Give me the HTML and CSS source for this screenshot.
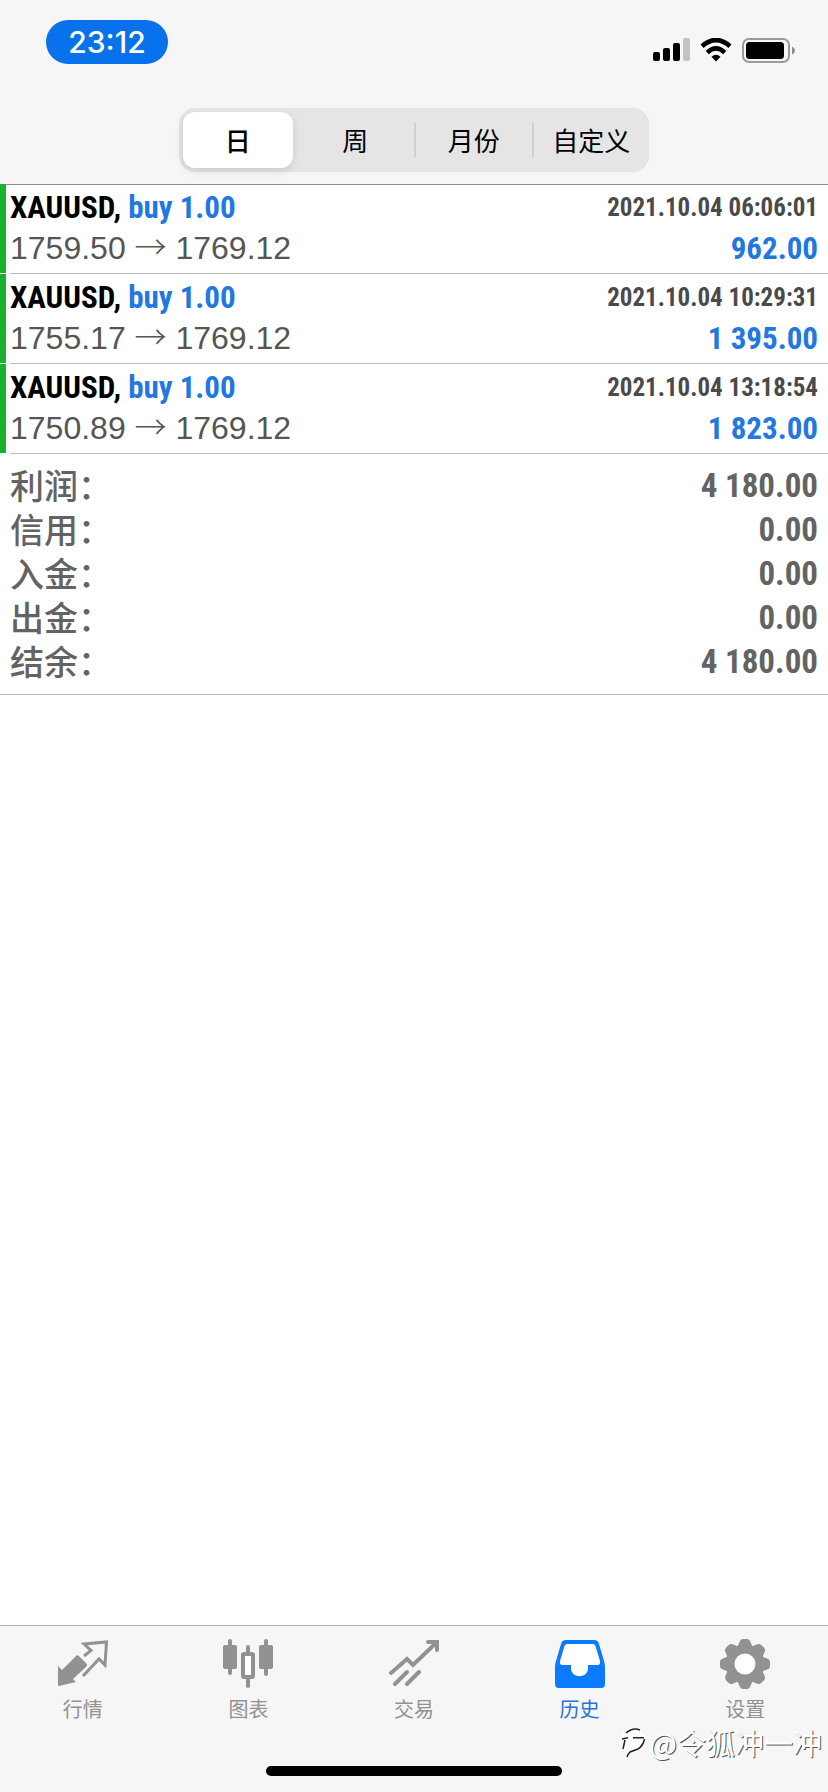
FILE: index.html
```html
<!DOCTYPE html>
<html lang="zh-CN">
<head>
  <meta charset="UTF-8" />
  <meta name="viewport" content="width=device-width, initial-scale=1.0"/>
  <title>历史</title>
  <link rel="stylesheet" href="styles.css">
</head>
<body>
  <header class="top">
    <div class="status">
      <span class="clock">23:12</span>
      <div class="status-icons">
        <svg width="37" height="24" viewBox="0 0 37 24">
          <rect x="0" y="14" width="7" height="9" rx="2"/>
          <rect x="10" y="10" width="7" height="13" rx="2"/>
          <rect x="20" y="5" width="7" height="18" rx="2"/>
          <rect x="30" y="0" width="7" height="23" rx="2" fill="#c3c3c3"/>
        </svg>
        <svg width="32" height="24" viewBox="0 0 32 24">
          <path d="M2 8.2Q16-4.200 30 8.200" fill="none" stroke="#000" stroke-width="4.600"/>
          <path d="M7.200 14.500Q16 6.400 24.800 14.500" fill="none" stroke="#000" stroke-width="4.600"/>
          <path d="M11.500 18.700Q16 15 20.500 18.700L16 23.500Z"/>
        </svg>
        <svg width="53" height="25" viewBox="0 0 53 25">
          <rect x="1" y="1" width="46" height="23" rx="6" fill="none" stroke="#9a9a9a" stroke-width="2"/>
          <rect x="4" y="4" width="38" height="17" rx="3.500"/>
          <path d="M50 8.500Q53 10 53 12.500T50 16.500Z" fill="#8c8c8c"/>
        </svg>
      </div>
    </div>
    <nav class="segments">
      <button class="segment active"><span>日</span></button>
      <button class="segment"><span>周</span></button>
      <button class="segment"><span>月份</span></button>
      <button class="segment"><span>自定义</span></button>
    </nav>
  </header>

  <main class="history">
    <ul class="deals">
      <li class="deal">
        <div class="deal-body">
          <div class="line"><span class="symbol">XAUUSD, <span class="side">buy 1.00</span></span><time class="date">2021.10.04 06:06:01</time></div>
          <div class="line"><span class="prices">1759.50 <span class="arrow">→</span> 1769.12</span><span class="profit">962.00</span></div>
        </div>
      </li>
      <li class="deal">
        <div class="deal-body">
          <div class="line"><span class="symbol">XAUUSD, <span class="side">buy 1.00</span></span><time class="date">2021.10.04 10:29:31</time></div>
          <div class="line"><span class="prices">1755.17 <span class="arrow">→</span> 1769.12</span><span class="profit">1 395.00</span></div>
        </div>
      </li>
      <li class="deal">
        <div class="deal-body">
          <div class="line"><span class="symbol">XAUUSD, <span class="side">buy 1.00</span></span><time class="date">2021.10.04 13:18:54</time></div>
          <div class="line"><span class="prices">1750.89 <span class="arrow">→</span> 1769.12</span><span class="profit">1 823.00</span></div>
        </div>
      </li>
    </ul>
    <dl class="summary">
      <div class="total"><dt>利润：</dt><dd>4 180.00</dd></div>
      <div class="total"><dt>信用：</dt><dd>0.00</dd></div>
      <div class="total"><dt>入金：</dt><dd>0.00</dd></div>
      <div class="total"><dt>出金：</dt><dd>0.00</dd></div>
      <div class="total"><dt>结余：</dt><dd>4 180.00</dd></div>
    </dl>
  </main>

  <footer class="bottom">
    <nav class="tabs">
      <a class="tab" href="#quotes">
        <svg width="50" height="50" viewBox="0 0 50 50">
          <path d="M0 27L4 31L17 18Q19 15 21 17L28 24Q30 26 28 28L15 40L18 43L1 47Q0 47 0 46Z"/>
          <path d="M26 17L33 11.500L26 5L48.500 3L47 26L41 20L25 37" fill="none" stroke="#929292" stroke-width="3"/>
        </svg>
        <span>行情</span>
      </a>
      <a class="tab" href="#charts">
        <svg width="50" height="50" viewBox="0 0 50 50">
          <rect x="0" y="6" width="14" height="24" rx="2"/>
          <rect x="5" y="0" width="4" height="36" rx="2"/>
          <rect x="36" y="6" width="14" height="24" rx="2"/>
          <rect x="41" y="0" width="4" height="37" rx="2"/>
          <path d="M25 8V14M25 38V47" fill="none" stroke="#929292" stroke-width="4" stroke-linecap="round"/>
          <rect x="20" y="15" width="10" height="23" rx="1" fill="#fff" stroke="#929292" stroke-width="4"/>
        </svg>
        <span>图表</span>
      </a>
      <a class="tab" href="#trade">
        <svg width="50" height="50" viewBox="0 0 50 50">
          <path d="M2 34L18 20L24 26L47 4M39 3H48V11M6 45L18 33M18 45L30 33" fill="none" stroke="#929292" stroke-width="4" stroke-linecap="round"/>
        </svg>
        <span>交易</span>
      </a>
      <a class="tab current" href="#history">
        <svg width="50" height="50" viewBox="0 0 50 50">
          <path d="M8 3H42L47 24L40 42H10L3 24Z" fill="#fff"/>
          <path fill-rule="evenodd" d="M11 1H39Q43 1 44 5L49 22Q50 25 50 28V45Q50 49 46 49H4Q0 49 0 45V28Q0 25 1 22L6 5Q7 1 11 1ZM12 5Q10 5 9.500 7L5 22Q4.500 26 7 26H16V29C16 40 33 40 33 29V26H43Q45.500 26 45 22L40.500 7Q40 5 38 5Z"/>
        </svg>
        <span>历史</span>
      </a>
      <a class="tab" href="#settings">
        <svg width="50" height="50" viewBox="0 0 50 50">
          <circle cx="25" cy="25" r="15" fill="#fff" stroke="#929292" stroke-width="9"/>
          <g id="teeth">
            <path id="tooth" d="M17 9L19.500 3Q20.500 0 23 0H27Q29.500 0 30.500 3L33 9Z"/>
            <use href="#tooth" transform="rotate(45 25 25)"/>
            <use href="#tooth" transform="rotate(90 25 25)"/>
            <use href="#tooth" transform="rotate(135 25 25)"/>
          </g>
          <use href="#teeth" transform="rotate(180 25 25)"/>
        </svg>
        <span>设置</span>
      </a>
    </nav>
    <div class="home-bar"></div>
    <div class="watermark">
      <svg width="30" height="34" viewBox="0 0 30 34">
        <circle cx="15" cy="15" r="12" fill="#fff"/>
        <path d="M8 8Q15 2 22 5M4 14L10 12.700M15 12.700H26M26.500 14Q25 21 20 24L12 27Q10 29 9 32M7 15L5 24" fill="none" stroke="#222" stroke-width="1.500"/>
      </svg>
      <span>@令狐冲一冲</span>
    </div>
  </footer>
</body>
</html>
```
FILE: styles.css
```css
* {
  margin: 0;
  padding: 0;
  box-sizing: border-box;
}

body {
  min-height: 100vh;
  display: flex;
  flex-direction: column;
  background: #fff;
  font-family: "Liberation Sans", "Noto Sans CJK SC", sans-serif;
}

.top {
  background: #f6f6f6;
  border-bottom: 1px solid #8c8c8c;
  padding-bottom: 12px;
}

.status {
  display: flex;
  justify-content: space-between;
  align-items: flex-start;
  height: 108px;
  padding: 20px 33px 0 46px;
}

.clock {
  width: 122px;
  border-radius: 22px;
  background: #0772ec;
  color: #fff;
  font: 500 30px/44px Inter, sans-serif;
  text-align: center;
}

.status-icons {
  display: flex;
  gap: 10px;
  padding-top: 18px;
}

/* Segmented control */
.segments {
  display: grid;
  grid-template-columns: repeat(4, 1fr);
  width: 57%;
  max-width: 470px;
  height: 64px;
  margin: 0 auto;
  border-radius: 16px;
  background: #e5e5e5;
}

.segment {
  display: flex;
  align-items: center;
  border: none;
  background: none;
  color: #000;
  font: 400 26px/34px "Noto Sans CJK SC", sans-serif;
}
.segment span {
  flex: 1;
}
.segment + .segment + .segment span {
  border-left: 2px solid #cfcfcf;
}
.segment.active {
  margin: 4px;
  border-radius: 12px;
  background: #fff;
  box-shadow: 0 3px 8px rgba(0, 0, 0, 0.12);
  font-weight: 500;
}

/* Deals */
.history {
  flex: 1;
}

.deals {
  margin-top: -1px;
  list-style: none;
}

.deal {
  display: flex;
  height: 90px;
}
.deal::before {
  content: '';
  width: 6px;
  margin-bottom: 1px;
  background: #18b22d;
}

.deal-body {
  flex: 1;
  margin-left: 4px;
  padding: 3px 10px 0 0;
  border-bottom: 1px solid #bdbdbd;
}

.line {
  display: flex;
  justify-content: space-between;
  align-items: center;
  height: 41px;
  line-height: 41px;
}

.symbol,
.date,
.profit,
.total dd {
  font-family: "Roboto Condensed", Roboto, sans-serif;
  font-weight: 700;
}

.symbol {
  font-size: 31px;
}
.side,
.profit {
  color: #2277e0;
}
.date {
  color: #4a4a4c;
  font-size: 25px;
}
.prices {
  color: #555;
  font-size: 32px;
}
.arrow {
  font-family: "Noto Sans CJK SC", sans-serif;
  font-weight: 300;
  line-height: 1;
}
.profit {
  font-size: 31px;
}

.summary {
  padding: 10px;
  border-bottom: 1px solid #bdbdbd;
  color: #636363;
}

.total {
  display: flex;
  justify-content: space-between;
  height: 44px;
  line-height: 44px;
}
.total dt {
  font-family: "Noto Sans CJK SC", sans-serif;
  font-size: 34px;
  font-weight: 500;
  line-height: 42px;
}
.total dd {
  font-size: 33px;
}

/* Tab bar */
.bottom {
  position: relative;
  padding: 13px 0 16px;
  border-top: 1px solid #b4b4b4;
  background: #f6f6f6;
}

.tabs {
  display: grid;
  grid-template-columns: repeat(5, 1fr);
  height: 127px;
}

.tab {
  display: flex;
  flex-direction: column;
  align-items: center;
  gap: 5px;
  color: #929292;
  fill: #929292;
  font: 400 20px/30px "Noto Sans CJK SC", sans-serif;
  text-decoration: none;
}
.tab.current {
  color: #2474d4;
  fill: #0a7aff;
}

.home-bar {
  width: 296px;
  height: 10px;
  margin: 0 auto;
  border-radius: 5px;
  background: #000;
}

.watermark {
  position: absolute;
  right: 6px;
  bottom: 30px;
  display: flex;
  align-items: center;
  gap: 2px;
  color: #fff;
  font: 400 29px/40px "Noto Sans CJK SC", sans-serif;
  text-shadow: 1px 1px 0 #555;
}
```
